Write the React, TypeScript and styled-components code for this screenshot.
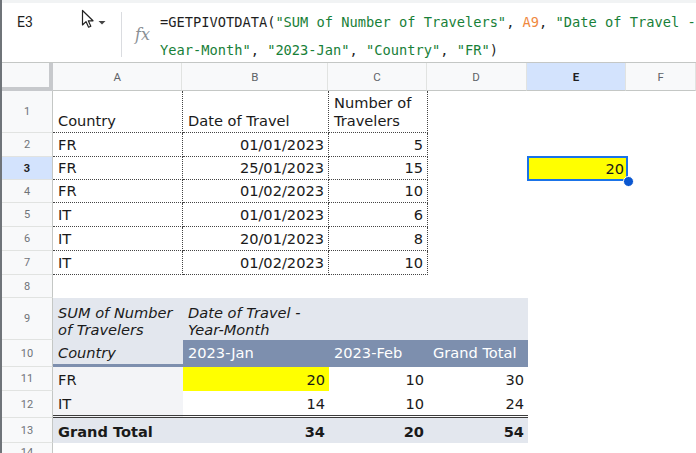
import React from 'react';
import styled, { createGlobalStyle } from 'styled-components';

const GlobalStyle = createGlobalStyle`
    html, body {
        margin: 0;
        padding: 0;
        background: #fff;
        overflow: hidden;
    }
    * {
        box-sizing: border-box;
    }
`;

const COL_WIDTHS = [130, 146, 99, 100, 100, 70];
const COL_NAMES = ['A', 'B', 'C', 'D', 'E', 'F'];

const PIVOT_LIGHT = '#e3e7ee';
const PIVOT_LIGHTER = '#f3f4f7';
const PIVOT_DARK = '#7d8fae';

interface CellProps {
    $w: number;
    $right?: boolean;
    $dotted?: boolean;
    $bg?: string;
    $bold?: boolean;
    $italic?: boolean;
    $color?: string;
    $bottom?: string;
    $lh?: number;
}

interface RowProps {
    $h: number;
}

const Page = styled.div`
    width: 696px;
    height: 453px;
    border-left: 2px solid #6f7479;
    font-family: 'DejaVu Sans', Verdana, sans-serif;
    overflow: hidden;
`;

const TopStrip = styled.div`
    height: 3px;
    background: #f1f3f4;
`;

const FormulaBar = styled.div`
    display: flex;
    align-items: flex-start;
    height: 60px;
    border-bottom: 1px solid #c4c7c5;
`;

const NameBox = styled.div`
    width: 79px;
    padding: 9px 0 0 15px;
    font-family: Roboto, 'Liberation Sans', sans-serif;
    font-size: 14px;
    line-height: 20px;
    color: #1f1f1f;
`;

const Picker = styled.div`
    width: 40px;
    display: flex;
    align-items: flex-start;
    gap: 3px;
    padding-top: 6px;
`;

const Separator = styled.div`
    width: 1px;
    height: 45px;
    margin-top: 9px;
    background: #dadce0;
`;

const FxLabel = styled.div`
    width: 38px;
    padding: 22px 0 0 13px;
    font-family: 'DejaVu Serif', 'Liberation Serif', serif;
    font-style: italic;
    font-size: 16px;
    line-height: 20px;
    color: #8a8f95;
`;

const FormulaText = styled.div`
    padding-top: 5px;
    font-family: 'DejaVu Sans Mono', 'Liberation Mono', monospace;
    font-size: 13.7px;
    line-height: 28px;
    color: #1f1f1f;
    white-space: pre;
`;

const Str = styled.span`
    color: #188038;
`;

const Ref = styled.span`
    color: #f0883e;
`;

const Sheet = styled.div`
    display: flex;
    flex-direction: column;
`;

const Row = styled.div<RowProps>`
    display: flex;
    height: ${({ $h }) => $h}px;
    flex-shrink: 0;
`;

const Corner = styled.div`
    width: 51px;
    background: #f8f9fa;
    border-right: 4px solid #c7c9cc;
    border-bottom: 4px solid #c7c9cc;
`;

const ColHeader = styled.div<{ $w: number; $active?: boolean }>`
    width: ${({ $w }) => $w}px;
    display: flex;
    align-items: center;
    justify-content: center;
    background: ${({ $active }) => ($active ? '#d3e3fd' : '#f8f9fa')};
    border-right: 1px solid #e1e3e1;
    border-bottom: 1px solid #c4c7c5;
    font-family: Roboto, 'Liberation Sans', sans-serif;
    font-size: 11.5px;
    font-weight: ${({ $active }) => ($active ? 700 : 400)};
    color: ${({ $active }) => ($active ? '#1f1f1f' : '#5f6368')};
`;

const RowHeader = styled.div<{ $active?: boolean }>`
    width: 51px;
    flex-shrink: 0;
    display: flex;
    align-items: center;
    justify-content: center;
    background: ${({ $active }) => ($active ? '#d3e3fd' : '#f8f9fa')};
    border-right: 1px solid #c4c7c5;
    border-bottom: 1px solid #e1e3e1;
    font-family: Roboto, 'Liberation Sans', sans-serif;
    font-size: 11px;
    font-weight: ${({ $active }) => ($active ? 700 : 400)};
    color: ${({ $active }) => ($active ? '#1f1f1f' : '#6f7378')};
`;

const Cell = styled.div<CellProps>`
    position: relative;
    width: ${({ $w }) => $w}px;
    flex-shrink: 0;
    display: flex;
    align-items: flex-end;
    justify-content: ${({ $right }) => ($right ? 'flex-end' : 'flex-start')};
    padding: 0 4px 2px 5px;
    background: ${({ $bg }) => $bg || 'transparent'};
    border-right: ${({ $dotted }) => ($dotted ? '1px dotted #444' : 'none')};
    border-bottom: ${({ $dotted, $bottom }) => $bottom || ($dotted ? '1px dotted #444' : 'none')};
    font-size: 14.6px;
    line-height: ${({ $lh }) => $lh || 19}px;
    font-weight: ${({ $bold }) => ($bold ? 700 : 400)};
    font-style: ${({ $italic }) => ($italic ? 'italic' : 'normal')};
    color: ${({ $color }) => $color || '#1a1a1a'};
    white-space: pre;
`;

const Selection = styled.div`
    position: absolute;
    inset: -1px 0 -1px -1px;
    border: 2px solid #1a73e8;
    pointer-events: none;
`;

const Handle = styled.div`
    position: absolute;
    right: -6px;
    bottom: -7px;
    width: 11px;
    height: 11px;
    border-radius: 50%;
    background: #0b57d0;
    border: 1px solid #fff;
`;

const CursorIcon = () => (
    <svg width="14" height="20" viewBox="0 0 14 20">
        <path
            d="M1.5 1.5 L1.5 16 L5 12.6 L7.6 18.2 L9.8 17.2 L7.3 11.8 L12 11.8 Z"
            fill="#fff"
            stroke="#222"
            strokeWidth="1.2"
            strokeLinejoin="round"
        />
    </svg>
);

const Caret = () => (
    <svg width="8" height="20" viewBox="0 0 8 20">
        <path d="M0.5 12 L7.5 12 L4 15.5 Z" fill="#444" />
    </svg>
);

const sourceRows = [
    ['FR', '01/01/2023', '5', 24],
    ['FR', '25/01/2023', '15', 23],
    ['FR', '01/02/2023', '10', 23],
    ['IT', '01/01/2023', '6', 24],
    ['IT', '20/01/2023', '8', 24],
    ['IT', '01/02/2023', '10', 24],
] as const;

const pivotRows = [
    { num: 11, country: 'FR', jan: '20', feb: '10', total: '30', h: 24, bottom: undefined },
    { num: 12, country: 'IT', jan: '14', feb: '10', total: '24', h: 27, bottom: '3px double #3c3c3c' },
];

const [wA, wB, wC, wD, wE] = COL_WIDTHS;

const App: React.FC = () => {
    return (
        <>
            <GlobalStyle />
            <Page>
                <TopStrip />
                <FormulaBar>
                    <NameBox>E3</NameBox>
                    <Picker>
                        <CursorIcon />
                        <Caret />
                    </Picker>
                    <Separator />
                    <FxLabel>fx</FxLabel>
                    <FormulaText>
                        =GETPIVOTDATA(<Str>"SUM of Number of Travelers"</Str>, <Ref>A9</Ref>, <Str>"Date of Travel -</Str>
                        {'\n'}
                        <Str>Year-Month"</Str>, <Str>"2023-Jan"</Str>, <Str>"Country"</Str>, <Str>"FR"</Str>)
                    </FormulaText>
                </FormulaBar>
                <Sheet>
                    <Row $h={28}>
                        <Corner />
                        {COL_NAMES.map((c, i) => (
                            <ColHeader key={c} $w={COL_WIDTHS[i]} $active={c === 'E'}>
                                {c}
                            </ColHeader>
                        ))}
                    </Row>
                    <Row $h={42}>
                        <RowHeader>1</RowHeader>
                        <Cell $w={wA} $dotted>Country</Cell>
                        <Cell $w={wB} $dotted>Date of Travel</Cell>
                        <Cell $w={wC} $dotted $lh={18}>{'Number of\nTravelers'}</Cell>
                    </Row>
                    {sourceRows.map(([country, date, n, h], i) => (
                        <Row $h={h} key={i}>
                            <RowHeader $active={i === 1}>{i + 2}</RowHeader>
                            <Cell $w={wA} $dotted>{country}</Cell>
                            <Cell $w={wB} $dotted $right>{date}</Cell>
                            <Cell $w={wC} $dotted $right>{n}</Cell>
                            {i === 1 && (
                                <>
                                    <Cell $w={wD} />
                                    <Cell $w={wE} $right $bg="#ffff00">
                                        20
                                        <Selection />
                                        <Handle />
                                    </Cell>
                                </>
                            )}
                        </Row>
                    ))}
                    <Row $h={23}>
                        <RowHeader>8</RowHeader>
                    </Row>
                    <Row $h={42}>
                        <RowHeader>9</RowHeader>
                        <Cell $w={wA} $bg={PIVOT_LIGHT} $italic $lh={17}>{'SUM of Number\nof Travelers'}</Cell>
                        <Cell $w={wB} $bg={PIVOT_LIGHT} $italic $lh={17}>{'Date of Travel -\nYear-Month'}</Cell>
                        <Cell $w={wC} $bg={PIVOT_LIGHT} />
                        <Cell $w={wD} $bg={PIVOT_LIGHT} />
                    </Row>
                    <Row $h={27}>
                        <RowHeader>10</RowHeader>
                        <Cell $w={wA} $bg={PIVOT_LIGHT} $italic $bottom={`3px solid ${PIVOT_DARK}`}>Country</Cell>
                        <Cell $w={wB} $bg={PIVOT_DARK} $color="#fff" $bottom={`3px solid ${PIVOT_DARK}`}>2023-Jan</Cell>
                        <Cell $w={wC} $bg={PIVOT_DARK} $color="#fff" $bottom={`3px solid ${PIVOT_DARK}`}>2023-Feb</Cell>
                        <Cell $w={wD} $bg={PIVOT_DARK} $color="#fff" $bottom={`3px solid ${PIVOT_DARK}`}>Grand Total</Cell>
                    </Row>
                    {pivotRows.map((r) => (
                        <Row $h={r.h} key={r.num}>
                            <RowHeader>{r.num}</RowHeader>
                            <Cell $w={wA} $bg={PIVOT_LIGHTER} $bottom={r.bottom}>{r.country}</Cell>
                            <Cell $w={wB} $right $bg={r.num === 11 ? '#ffff00' : '#fff'} $bottom={r.bottom}>{r.jan}</Cell>
                            <Cell $w={wC} $right $bottom={r.bottom}>{r.feb}</Cell>
                            <Cell $w={wD} $right $bottom={r.bottom}>{r.total}</Cell>
                        </Row>
                    ))}
                    <Row $h={25}>
                        <RowHeader>13</RowHeader>
                        <Cell $w={wA} $bg={PIVOT_LIGHT} $bold>Grand Total</Cell>
                        <Cell $w={wB} $bg={PIVOT_LIGHT} $bold $right>34</Cell>
                        <Cell $w={wC} $bg={PIVOT_LIGHT} $bold $right>20</Cell>
                        <Cell $w={wD} $bg={PIVOT_LIGHT} $bold $right>54</Cell>
                    </Row>
                    <Row $h={20}>
                        <RowHeader>14</RowHeader>
                    </Row>
                </Sheet>
            </Page>
        </>
    );
};

export default App;
